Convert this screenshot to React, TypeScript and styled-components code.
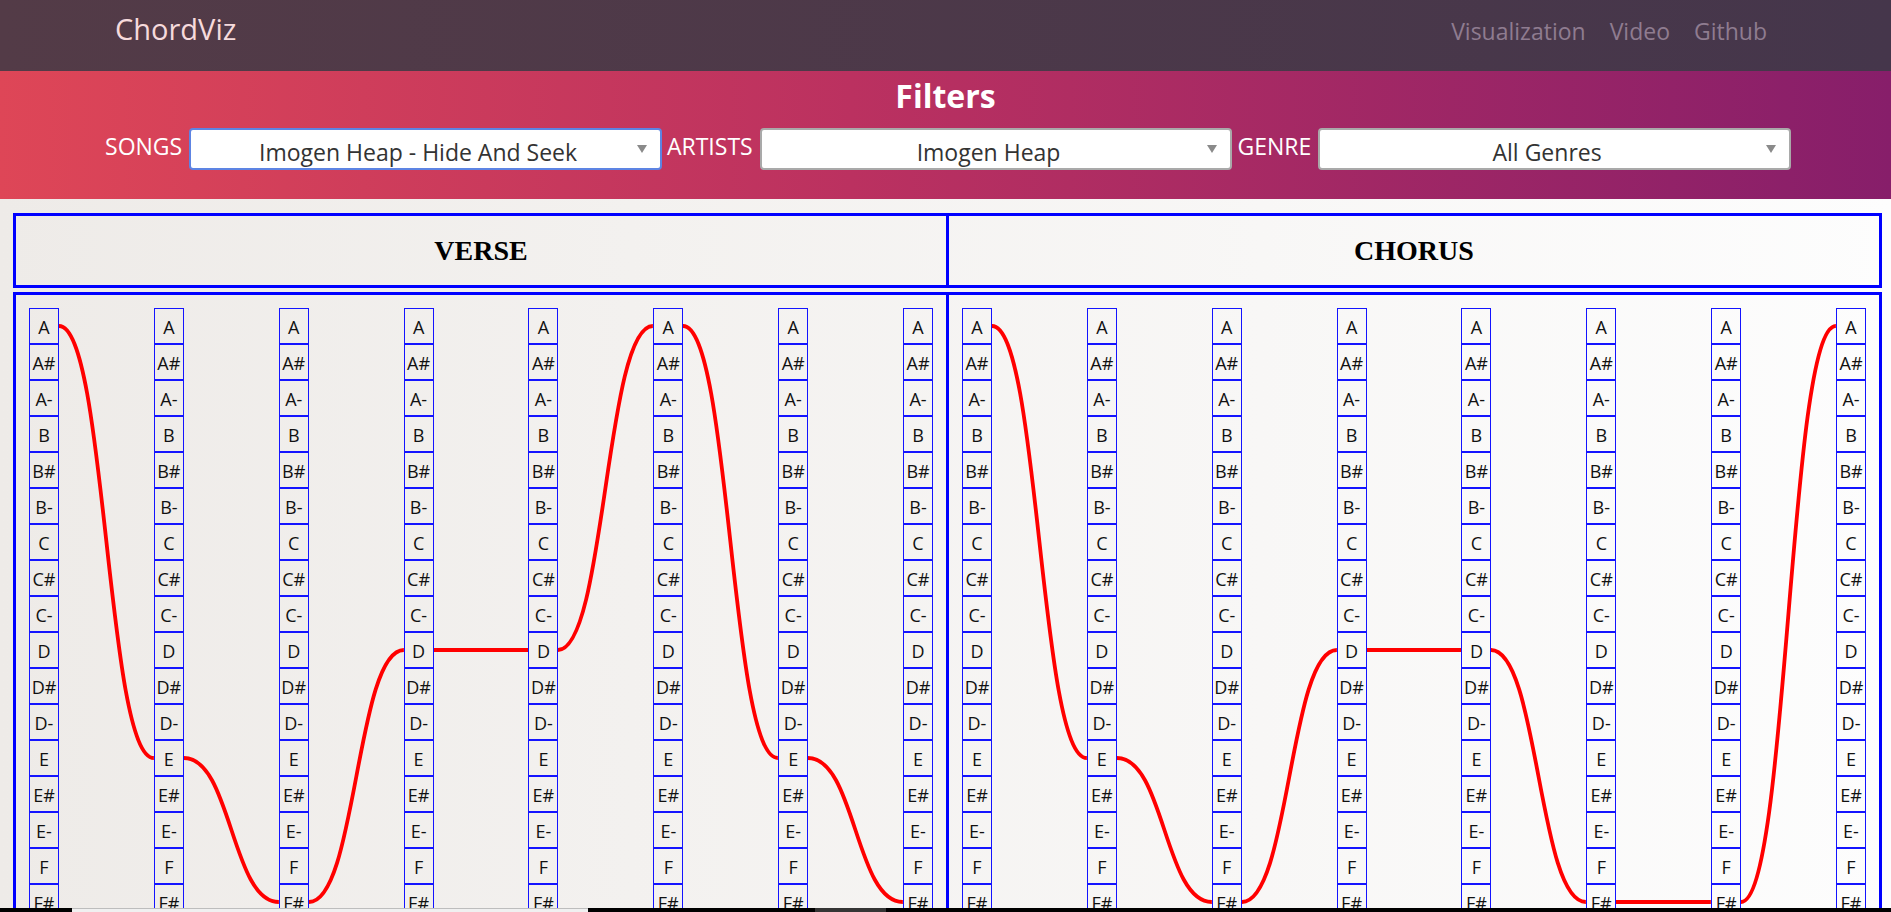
import React from 'react';
import styled, { createGlobalStyle } from 'styled-components';

const NOTES = ['A', 'A#', 'A-', 'B', 'B#', 'B-', 'C', 'C#', 'C-', 'D', 'D#', 'D-', 'E', 'E#', 'E-', 'F', 'F#', 'F-', 'G', 'G#', 'G-'];
const CELL = 36;
const COL_H = NOTES.length * CELL;

const VERSE = ['A', 'E', 'F#', 'D', 'D', 'A', 'E', 'F#'];
const CHORUS = ['A', 'E', 'F#', 'D', 'D', 'F#', 'F#', 'A'];

const GlobalStyle = createGlobalStyle`
  html, body {
    margin: 0;
    padding: 0;
    overflow: hidden;
  }
  body {
    font-family: "Open Sans", "Noto Sans", sans-serif;
  }
`;

const Page = styled.div`
  min-height: 100vh;
  background: linear-gradient(to right, #eeebe8, #fdfdfd);
`;

const NavBar = styled.nav`
  height: 71px;
  box-sizing: border-box;
  display: flex;
  justify-content: space-between;
  align-items: flex-start;
  padding: 0 124px 0 115px;
  background: linear-gradient(to right, #533b47, #45364b);
`;

const Brand = styled.div`
  font-size: 29px;
  color: #f6dadc;
  margin-top: 9px;
`;

const NavLinks = styled.div`
  display: flex;
  gap: 24px;
  margin-top: 15px;
`;

const NavLink = styled.a`
  font-size: 23px;
  color: #8f7c90;
  text-decoration: none;
`;

const Band = styled.section`
  display: flex;
  flex-direction: column;
  align-items: center;
  padding: 6px 0 29px;
  background: linear-gradient(to right, #de4657, #bb3160 45%, #871e6a);
`;

const Title = styled.h2`
  margin: 0;
  font-size: 32px;
  line-height: 1.2;
  font-weight: 700;
  color: #ffffff;
`;

const FilterRow = styled.div`
  display: flex;
  justify-content: center;
  align-items: flex-start;
  width: 100%;
  margin-top: 13px;
`;

const Label = styled.span`
  font-size: 23px;
  line-height: 30px;
  color: #ffffff;
  margin: 3px 7px 0 5px;
`;

const Dropdown = styled.div<{ $focused?: boolean }>`
  width: 25%;
  height: 42px;
  box-sizing: border-box;
  display: flex;
  align-items: center;
  padding: 0 13px 0 8px;
  background: #ffffff;
  border: 2px solid ${(p) => (p.$focused ? '#5d84e3' : '#a9a9a9')};
  border-radius: 4px;
`;

const DropText = styled.span`
  flex: 1;
  text-align: center;
  font-size: 23px;
  line-height: 30px;
  padding-top: 5px;
  color: #333333;
`;

const Arrow = styled.span`
  width: 0;
  height: 0;
  border-left: 5px solid transparent;
  border-right: 5px solid transparent;
  border-top: 8px solid #8a8a8a;
`;

const Board = styled.main`
  margin: 14px 9px 0 13px;
  display: flex;
  flex-direction: column;
  gap: 4px;
`;

const Row = styled.div`
  display: flex;
`;

const HeadCell = styled.div<{ $first?: boolean }>`
  flex: 1 1 0;
  box-sizing: content-box;
  height: 69px;
  display: flex;
  align-items: center;
  justify-content: center;
  border: 3px solid #0000ff;
  border-right: ${(p) => (p.$first ? 'none' : '3px solid #0000ff')};
  font-family: "Liberation Serif", "Times New Roman", serif;
  font-weight: 700;
  font-size: 28px;
  color: #000;
`;

const Section = styled.div<{ $first?: boolean }>`
  flex: 1 1 0;
  box-sizing: content-box;
  display: flex;
  align-items: flex-start;
  padding: 13px 13px;
  border: 3px solid #0000ff;
  border-right: ${(p) => (p.$first ? 'none' : '3px solid #0000ff')};
`;

const Column = styled.div`
  flex: none;
  width: 30px;
  display: flex;
  flex-direction: column;
`;

const Cell = styled.div`
  box-sizing: border-box;
  height: ${CELL}px;
  border: 1px solid #1414ff;
  display: flex;
  align-items: center;
  justify-content: center;
  padding-top: 2px;
  font-size: 18px;
  color: #111;
  white-space: nowrap;
`;

const Connector = styled.div`
  flex: 1 1 0;
  height: ${COL_H}px;
  svg {
    display: block;
    width: 100%;
    height: 100%;
  }
`;

const BottomStrip = styled.div`
  position: fixed;
  left: 0;
  right: 0;
  bottom: 0;
  height: 4px;
  background: #000;
  &::before {
    content: '';
    position: absolute;
    left: 72px;
    width: 516px;
    top: 0;
    bottom: 0;
    background: #f0f0f0;
    border-top: 1px solid #bdbdbd;
    box-sizing: border-box;
  }
  &::after {
    content: '';
    position: absolute;
    left: 815px;
    width: 71px;
    top: 0;
    bottom: 0;
    background: #353535;
  }
`;

const yOf = (note: string) => NOTES.indexOf(note) * CELL + CELL / 2;

function ChordColumn() {
  return (
    <Column>
      {NOTES.map((n) => (
        <Cell key={n}>{n}</Cell>
      ))}
    </Column>
  );
}

function Link({ from, to }: { from: string; to: string }) {
  const y0 = yOf(from);
  const y1 = yOf(to);
  return (
    <Connector>
      <svg viewBox={`0 0 100 ${COL_H}`} preserveAspectRatio="none">
        <path
          d={`M0,${y0} C50,${y0} 50,${y1} 100,${y1}`}
          fill="none"
          stroke="#ff0000"
          strokeWidth={3.8}
          vectorEffect="non-scaling-stroke"
        />
      </svg>
    </Connector>
  );
}

function Progression({ chords }: { chords: string[] }) {
  const items: React.ReactNode[] = [];
  chords.forEach((c, i) => {
    if (i > 0) items.push(<Link key={`l${i}`} from={chords[i - 1]} to={c} />);
    items.push(<ChordColumn key={`c${i}`} />);
  });
  return <>{items}</>;
}

export default function App() {
  return (
    <Page>
      <GlobalStyle />
      <NavBar>
        <Brand>ChordViz</Brand>
        <NavLinks>
          <NavLink href="#">Visualization</NavLink>
          <NavLink href="#">Video</NavLink>
          <NavLink href="#">Github</NavLink>
        </NavLinks>
      </NavBar>
      <Band>
        <Title>Filters</Title>
        <FilterRow>
          <Label>SONGS</Label>
          <Dropdown $focused>
            <DropText>Imogen Heap - Hide And Seek</DropText>
            <Arrow />
          </Dropdown>
          <Label>ARTISTS</Label>
          <Dropdown>
            <DropText>Imogen Heap</DropText>
            <Arrow />
          </Dropdown>
          <Label>GENRE</Label>
          <Dropdown>
            <DropText>All Genres</DropText>
            <Arrow />
          </Dropdown>
        </FilterRow>
      </Band>
      <Board>
        <Row>
          <HeadCell $first>VERSE</HeadCell>
          <HeadCell>CHORUS</HeadCell>
        </Row>
        <Row>
          <Section $first>
            <Progression chords={VERSE} />
          </Section>
          <Section>
            <Progression chords={CHORUS} />
          </Section>
        </Row>
      </Board>
      <BottomStrip />
    </Page>
  );
}
